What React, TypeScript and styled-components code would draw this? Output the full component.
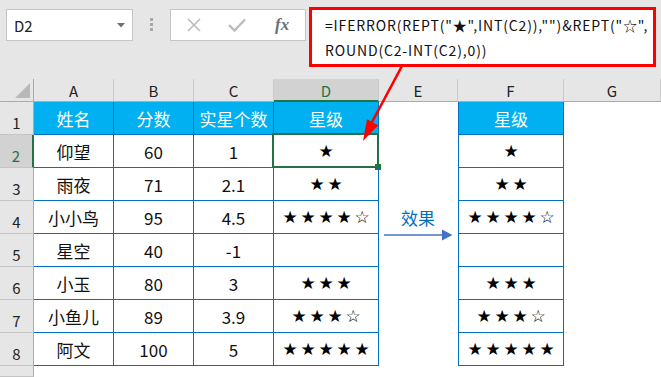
import React from "react";
import styled, { createGlobalStyle, css } from "styled-components";

const Global = createGlobalStyle`
  html, body { margin: 0; padding: 0; background: #fff; }
  * { box-sizing: border-box; }
`;

const CJK = `"Noto Sans CJK SC", "Noto Sans", sans-serif`;

const Root = styled.div`
  width: 661px;
  height: 377px;
  position: relative;
  overflow: hidden;
  background: #fff;
  font-family: ${CJK};
  color: #111;
`;

const Toolbar = styled.div`
  height: 79px;
  background: #e6e6e6;
  display: flex;
  align-items: flex-start;
  padding: 7px 0 0 6px;
`;

const NameBox = styled.div`
  margin-top: 2px;
  width: 127px;
  height: 32px;
  background: #fff;
  border: 1px solid #c6c6c6;
  display: flex;
  align-items: center;
  justify-content: space-between;
  padding: 0 7px 0 7px;
  font-size: 15px;
  color: #222;
`;

const Dots = styled.div`
  width: 37px;
  height: 32px;
  margin-top: 2px;
  display: flex;
  flex-direction: column;
  align-items: center;
  justify-content: flex-start;
  gap: 2px;
  padding-top: 9px;
  & > span {
    width: 3px;
    height: 3px;
    background: #a8a8a8;
  }
`;

const FxBox = styled.div`
  margin-top: 2px;
  width: 136px;
  height: 32px;
  background: #fff;
  border: 1px solid #c6c6c6;
  display: flex;
  align-items: center;
  padding-left: 16px;
  gap: 27px;
`;

const FxText = styled.span`
  font-family: "Liberation Serif", serif;
  font-style: italic;
  font-weight: bold;
  font-size: 17px;
  color: #6f6f6f;
  margin-left: 2px;
`;

const FormulaBox = styled.div`
  margin-left: 3px;
  width: 347px;
  height: 60px;
  background: #fff;
  border: 3px solid #ff0000;
  padding: 3px 0 0 13px;
  font-size: 14px;
  letter-spacing: 0.85px;
  line-height: 25px;
  color: #111;
  white-space: nowrap;
`;

const Sheet = styled.div`
  display: grid;
  grid-template-columns: 34px 80px 80px 80px 105px 79px 106px 97px;
  grid-template-rows: 23px repeat(8, 33px) 11px;
`;

const Corner = styled.div`
  background: #e6e6e6;
  border-right: 1px solid #ababab;
  border-bottom: 1px solid #ababab;
  display: flex;
  align-items: flex-end;
  justify-content: flex-end;
  padding: 0 3px 3px 0;
  & > i {
    width: 0;
    height: 0;
    border-style: solid;
    border-width: 0 0 15px 15px;
    border-color: transparent transparent #b9b9b9 transparent;
  }
`;

const ColHead = styled.div<{ $active?: boolean }>`
  background: ${(p) => (p.$active ? "#d2d2d2" : "#e6e6e6")};
  border-right: 1px solid #cacaca;
  border-bottom: ${(p) => (p.$active ? "2px solid #217346" : "1px solid #ababab")};
  display: flex;
  align-items: center;
  justify-content: center;
  font-size: 15px;
  color: ${(p) => (p.$active ? "#217346" : "#222")};
  padding-top: ${(p) => (p.$active ? "1px" : "0")};
`;

const RowHead = styled.div<{ $active?: boolean }>`
  background: ${(p) => (p.$active ? "#d2d2d2" : "#e6e6e6")};
  border-right: ${(p) => (p.$active ? "2px solid #217346" : "1px solid #ababab")};
  border-bottom: 1px solid #c4c4c4;
  display: flex;
  align-items: flex-end;
  justify-content: center;
  font-size: 15px;
  line-height: 19px;
  padding-bottom: 2px;
  color: ${(p) => (p.$active ? "#217346" : "#222")};
`;

const Cell = styled.div<{ $head?: boolean; $boxed?: "grid" | "side"; $selected?: boolean }>`
  position: relative;
  display: flex;
  align-items: center;
  justify-content: center;
  font-size: 17px;
  background: ${(p) => (p.$head ? "#00b0f0" : "#fff")};
  color: ${(p) => (p.$head ? "#fff" : "#111")};
  ${(p) =>
    p.$boxed &&
    css`
      border-right: 1px solid #0070c0;
      border-bottom: 1px solid #0070c0;
    `}
  ${(p) =>
    p.$boxed === "side" &&
    css`
      border-left: 1px solid #0070c0;
    `}
  ${(p) =>
    p.$selected &&
    css`
      z-index: 2;
      &::after {
        content: "";
        position: absolute;
        top: -2px;
        left: -2px;
        right: -1px;
        bottom: -1px;
        border: 2px solid #217346;
      }
      &::before {
        content: "";
        position: absolute;
        right: -3px;
        bottom: -3px;
        width: 6px;
        height: 6px;
        background: #217346;
        z-index: 3;
      }
    `}
`;

const StarRow = styled.div`
  display: flex;
  font-family: "DejaVu Sans", sans-serif;
  font-size: 17px;
  line-height: 20px;
  color: #000;
  & > span {
    width: 18px;
    text-align: center;
  }
`;

const EffectBlock = styled.div`
  grid-column: 6;
  grid-row: 5 / 7;
  display: flex;
  flex-direction: column;
  align-items: flex-start;
  padding: 6px 0 0 5px;
  position: relative;
  z-index: 1;
`;

const EffectLabel = styled.div`
  width: 68px;
  text-align: center;
  font-size: 17px;
  line-height: 22px;
  color: #0070c0;
`;

const Overlay = styled.svg`
  position: absolute;
  left: 0;
  top: 0;
  pointer-events: none;
  z-index: 5;
`;

type Row = [string, string, string, number, number];
const rows: Row[] = [
  ["仰望", "60", "1", 1, 0],
  ["雨夜", "71", "2.1", 2, 0],
  ["小小鸟", "95", "4.5", 4, 1],
  ["星空", "40", "-1", 0, 0],
  ["小玉", "80", "3", 3, 0],
  ["小鱼儿", "89", "3.9", 3, 1],
  ["阿文", "100", "5", 5, 0],
];

const Stars = ({ full, half }: { full: number; half: number }) => {
  const chars = ("★".repeat(full) + "☆".repeat(half)).split("");
  return (
    <StarRow>
      {chars.map((c, i) => (
        <span key={i}>{c}</span>
      ))}
    </StarRow>
  );
};

export default function App() {
  const cols = ["A", "B", "C", "D", "E", "F", "G"];
  return (
    <Root>
      <Global />
      <Toolbar>
        <NameBox>
          <span>D2</span>
          <svg width="8" height="5" viewBox="0 0 8 5">
            <path d="M0 0 L8 0 L4 4.5 Z" fill="#6f6f6f" />
          </svg>
        </NameBox>
        <Dots>
          <span />
          <span />
          <span />
        </Dots>
        <FxBox>
          <svg width="14" height="14" viewBox="0 0 14 14">
            <path d="M1 1 L13 13 M13 1 L1 13" stroke="#bcbcbc" strokeWidth="1.6" />
          </svg>
          <svg width="18" height="14" viewBox="0 0 18 14">
            <path d="M1 7 L6.5 12.5 L17 1.5" stroke="#bcbcbc" strokeWidth="2.4" fill="none" />
          </svg>
          <FxText>fx</FxText>
        </FxBox>
        <FormulaBox>
          <div>=IFERROR(REPT("★",INT(C2)),"")&amp;REPT("☆",</div>
          <div>ROUND(C2-INT(C2),0))</div>
        </FormulaBox>
      </Toolbar>
      <Sheet>
        <Corner>
          <i />
        </Corner>
        {cols.map((c) => (
          <ColHead key={c} $active={c === "D"}>
            {c}
          </ColHead>
        ))}

        <RowHead>1</RowHead>
        <Cell $head $boxed="grid">姓名</Cell>
        <Cell $head $boxed="grid">分数</Cell>
        <Cell $head $boxed="grid">实星个数</Cell>
        <Cell $head $boxed="grid">星级</Cell>
        <Cell />
        <Cell $head $boxed="side">星级</Cell>
        <Cell />

        {rows.map((r, i) => {
          const rowNum = i + 2;
          const skipE = rowNum === 4 || rowNum === 5;
          return (
            <React.Fragment key={rowNum}>
              <RowHead $active={rowNum === 2}>{rowNum}</RowHead>
              <Cell $boxed="grid">{r[0]}</Cell>
              <Cell $boxed="grid">{r[1]}</Cell>
              <Cell $boxed="grid">{r[2]}</Cell>
              <Cell $boxed="grid" $selected={rowNum === 2}>
                <Stars full={r[3]} half={r[4]} />
              </Cell>
              {!skipE && <Cell />}
              <Cell $boxed="side">
                <Stars full={r[3]} half={r[4]} />
              </Cell>
              <Cell />
            </React.Fragment>
          );
        })}

        <EffectBlock>
          <EffectLabel>效果</EffectLabel>
          <svg width="69" height="12" viewBox="0 0 69 12">
            <line x1="0" y1="6" x2="60" y2="6" stroke="#4472c4" strokeWidth="1.5" />
            <path d="M58 0.5 L68.5 6 L58 11.5 Z" fill="#4472c4" />
          </svg>
        </EffectBlock>

        <RowHead />
        <Cell />
        <Cell />
        <Cell />
        <Cell />
        <Cell />
        <Cell />
        <Cell />
      </Sheet>
      <Overlay width="661" height="377" viewBox="0 0 661 377">
        <line x1="402" y1="66" x2="371" y2="124" stroke="#ff0000" strokeWidth="2.6" />
        <path d="M363 141 L367 119.2 L378.2 125.2 Z" fill="#ff0000" />
      </Overlay>
    </Root>
  );
}
